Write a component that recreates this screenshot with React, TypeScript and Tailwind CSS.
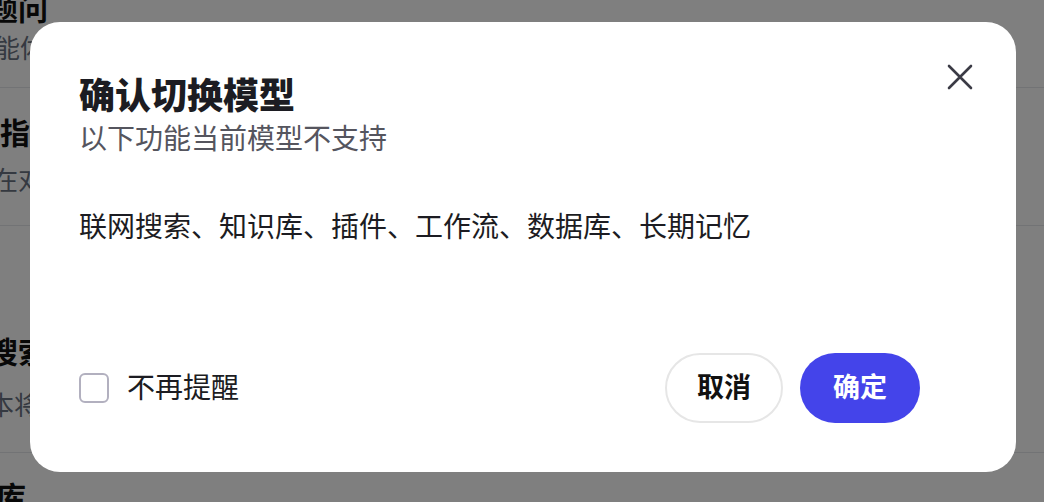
import React, { useState } from "react";

const font = {
  fontFamily: '"Inter", "Noto Sans CJK SC", sans-serif',
};

const bgItems = [
  { title: "题问", desc: "能体" },
  { title: "指令", desc: "在对话" },
  { title: "搜索", desc: "本将" },
  { title: "库", desc: "" },
];

const App = () => {
  const [noRemind, setNoRemind] = useState(false);

  return (
    <div
      className="relative w-[1044px] h-[502px] overflow-hidden bg-white"
      style={font}
    >
      {/* page behind the dialog */}
      <div className="flex flex-col -ml-[12px] -mt-[34px]">
        <div className="h-[122px] flex flex-col justify-center border-b border-gray-200">
          <div className="text-[30px] font-bold text-[#111] leading-[44px]">
            {bgItems[0].title}
          </div>
          <div className="text-[26px] text-gray-500 leading-[36px] pl-[6px]">
            {bgItems[0].desc}
          </div>
        </div>
        <div className="h-[138px] flex flex-col justify-center border-b border-gray-200">
          <div className="text-[30px] font-bold text-[#111] leading-[48px] pl-[12px]">
            {bgItems[1].title}
          </div>
          <div className="text-[26px] text-gray-500 leading-[48px] pl-[4px]">
            {bgItems[1].desc}
          </div>
        </div>
        <div className="h-[227px] flex flex-col justify-end pb-[18px] border-b border-gray-200">
          <div className="text-[30px] font-bold text-[#111] leading-[52px]">
            {bgItems[2].title}
          </div>
          <div className="text-[26px] text-gray-500 leading-[56px]">
            {bgItems[2].desc}
          </div>
        </div>
        <div className="pt-[24px] text-[30px] font-bold text-[#111] leading-[40px] pl-[8px]">
          {bgItems[3].title}
        </div>
      </div>

      {/* overlay */}
      <div className="absolute inset-0 bg-black/50 pl-[30px] pt-[22px]">
        <div className="w-[986px] h-[450px] bg-white rounded-[30px] flex flex-col pl-[49px] pr-[96px] pt-[51px] pb-[49px]">
          <div className="flex justify-between">
            <div className="flex flex-col">
              <div className="text-[36px] font-extrabold text-[#1c1c22] leading-[46px]">
                确认切换模型
              </div>
              <div className="text-[28px] text-[#55555e] leading-[40px]">
                以下功能当前模型不支持
              </div>
            </div>
            <button className="w-[40px] h-[40px] -mr-[60px] -mt-[16px] flex items-center justify-center text-[#3b3b45]">
              <svg width="26" height="26" viewBox="0 0 26 26" fill="none">
                <path
                  d="M2 2L24 24M24 2L2 24"
                  stroke="currentColor"
                  strokeWidth="2.6"
                  strokeLinecap="round"
                />
              </svg>
            </button>
          </div>

          <div className="mt-[48px] text-[28px] text-[#1c1c22] leading-[40px]">
            联网搜索、知识库、插件、工作流、数据库、长期记忆
          </div>

          <div className="mt-auto flex items-center justify-between">
            <label className="flex items-center gap-[18px] cursor-pointer">
              <span
                onClick={() => setNoRemind(!noRemind)}
                className="w-[30px] h-[30px] rounded-[6px] border-2 border-[#b2b0bf] bg-white"
              />
              <span className="text-[28px] text-[#1c1c22] leading-[40px]">
                不再提醒
              </span>
            </label>
            <div className="flex items-center gap-[17px]">
              <button className="w-[118px] h-[70px] rounded-full border-2 border-[#e6e6e6] bg-white text-[27px] font-bold text-[#111]">
                取消
              </button>
              <button className="w-[120px] h-[70px] rounded-full bg-[#4444ea] text-[27px] font-bold text-white">
                确定
              </button>
            </div>
          </div>
        </div>
      </div>
    </div>
  );
};

export default App;
